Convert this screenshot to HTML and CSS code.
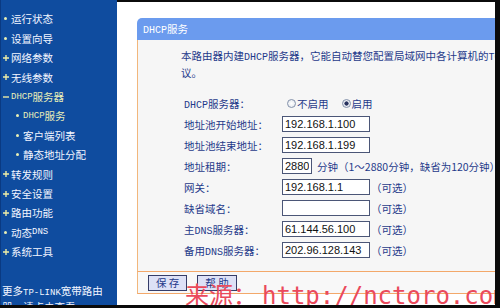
FILE: index.html
```html
<!DOCTYPE html>
<html lang="zh-CN">
<head>
<meta charset="utf-8">
<title>DHCP服务</title>
<link rel="stylesheet" href="styles.css">
</head>
<body>
<div class="screen">
  <nav class="sidebar">
    <ul class="menu">
      <li class="item"><span class="mk"><i class="dot"></i></span>运行状态</li>
      <li class="item"><span class="mk"><i class="dot"></i></span>设置向导</li>
      <li class="item"><span class="mk"><svg class="ic" viewBox="0 0 7 7"><path d="M0 3.5H7M3.5 0V7"/></svg></span>网络参数</li>
      <li class="item"><span class="mk"><svg class="ic" viewBox="0 0 7 7"><path d="M0 3.5H7M3.5 0V7"/></svg></span>无线参数</li>
      <li class="item active"><span class="mk"><svg class="ic" viewBox="0 0 7 7"><path d="M0 3.5H7"/></svg></span><span class="en">DHCP</span>服务器</li>
      <li class="item sub active"><span class="mk"><i class="dot"></i></span><span class="en">DHCP</span>服务</li>
      <li class="item sub"><span class="mk"><i class="dot"></i></span>客户端列表</li>
      <li class="item sub"><span class="mk"><i class="dot"></i></span>静态地址分配</li>
      <li class="item"><span class="mk"><svg class="ic" viewBox="0 0 7 7"><path d="M0 3.5H7M3.5 0V7"/></svg></span>转发规则</li>
      <li class="item"><span class="mk"><svg class="ic" viewBox="0 0 7 7"><path d="M0 3.5H7M3.5 0V7"/></svg></span>安全设置</li>
      <li class="item"><span class="mk"><svg class="ic" viewBox="0 0 7 7"><path d="M0 3.5H7M3.5 0V7"/></svg></span>路由功能</li>
      <li class="item"><span class="mk"><i class="dot"></i></span>动态<span class="en">DNS</span></li>
      <li class="item"><span class="mk"><svg class="ic" viewBox="0 0 7 7"><path d="M0 3.5H7M3.5 0V7"/></svg></span>系统工具</li>
    </ul>
    <p class="more">更多<span class="en">TP-LINK</span>宽带路由<br>器，请点击查看 &gt;&gt;</p>
  </nav>

  <main class="main">
    <section class="panel">
      <h1 class="panel-title"><span class="en">DHCP</span>服务</h1>
      <div class="panel-body">
        <p class="intro">本路由器内建<span class="en">DHCP</span>服务器，它能自动替您配置局域网中各计算机的<span class="en">TCP/IP</span>协<br>议。</p>
        <div class="form">
          <div class="row">
            <span class="label"><span class="en">DHCP</span>服务器：</span>
            <div class="field">
              <label class="radio"><input type="radio" name="dhcp">不启用</label>
              <label class="radio"><input type="radio" name="dhcp" checked>启用</label>
            </div>
          </div>
          <div class="row">
            <span class="label">地址池开始地址：</span>
            <div class="field"><input class="txt" type="text" value="192.168.1.100"></div>
          </div>
          <div class="row">
            <span class="label">地址池结束地址：</span>
            <div class="field"><input class="txt" type="text" value="192.168.1.199"></div>
          </div>
          <div class="row">
            <span class="label">地址租期：</span>
            <div class="field"><input class="txt short" type="text" value="2880"><span class="note">分钟（1～2880分钟，缺省为120分钟）</span></div>
          </div>
          <div class="row">
            <span class="label">网关：</span>
            <div class="field"><input class="txt" type="text" value="192.168.1.1"><span class="opt">（可选）</span></div>
          </div>
          <div class="row">
            <span class="label">缺省域名：</span>
            <div class="field"><input class="txt" type="text" value=""><span class="opt">（可选）</span></div>
          </div>
          <div class="row">
            <span class="label">主<span class="en">DNS</span>服务器：</span>
            <div class="field"><input class="txt" type="text" value="61.144.56.100"><span class="opt">（可选）</span></div>
          </div>
          <div class="row">
            <span class="label">备用<span class="en">DNS</span>服务器：</span>
            <div class="field"><input class="txt" type="text" value="202.96.128.143"><span class="opt">（可选）</span></div>
          </div>
        </div>
      </div>
      <div class="panel-actions">
        <button class="btn" type="button">保 存</button>
        <button class="btn" type="button">帮 助</button>
      </div>
    </section>
    <div class="watermark"><span class="wm-cn">来源：</span>http://nctoro.com</div>
  </main>
</div>
</body>
</html>
```

FILE: styles.css
```css
* {
  box-sizing: border-box;
  margin: 0;
  padding: 0;
}

html,
body {
  width: 500px;
  height: 308px;
  overflow: hidden;
  background: #0b0b0b;
}

body {
  font-family: "Noto Sans CJK SC", sans-serif;
  font-size: 10.5px;
}

.en {
  font-family: "Liberation Mono", monospace;
  font-size: 10px;
}

.screen {
  display: flex;
  height: 305px;
}

/* ---------- sidebar ---------- */
.sidebar {
  width: 117px;
  flex: none;
  display: flex;
  flex-direction: column;
  overflow: hidden;
  background: #0f4c9f;
  border-left: 1px solid #0a3a82;
  color: #f3f6ff;
}

.sidebar .en {
  font-size: 9px;
}

.menu {
  list-style: none;
  padding-top: 9.3px;
}

.item {
  display: flex;
  align-items: center;
  height: 19.4px;
  padding-left: 1px;
  white-space: nowrap;
}

.item.sub {
  padding-left: 13px;
}

.item.active {
  color: #eaf0b8;
}

.mk {
  width: 9px;
  flex: none;
  display: flex;
  align-items: center;
  padding-left: 1px;
}

.dot {
  display: block;
  width: 3px;
  height: 3px;
  margin-left: 1px;
  border-radius: 50%;
  background: #e8efb4;
}

.ic {
  display: block;
  width: 6px;
  height: 6px;
  fill: none;
  stroke: #efeea6;
  stroke-width: 1.6;
}

.more {
  margin-top: 22.5px;
  padding-left: 1px;
  line-height: 14px;
  white-space: nowrap;
}

/* ---------- main ---------- */
.main {
  flex: 1;
  position: relative;
  overflow: hidden;
  background: #ffffff;
  border-top: 2px solid #0b0b0b;
  border-right: 5px solid #0b0b0b;
  padding: 16px 0 0 20px;
}

.panel {
  width: 420px;
}

.panel-title {
  height: 22px;
  line-height: 22px;
  padding-left: 6px;
  font-size: 10.5px;
  font-weight: normal;
  color: #ffffff;
  background: #6b9bee;
  border-radius: 5px 5px 0 0;
}

.panel-body {
  background: #f6f6f6;
  border-left: 1px solid #f2b77c;
  padding: 8px 0 10.5px 43px;
  color: #1f3a8a;
}

.intro {
  line-height: 15px;
  white-space: nowrap;
}

.form {
  margin-top: 12.5px;
  margin-left: 3px;
}

.row {
  display: flex;
  align-items: center;
  height: 21px;
}

.label {
  width: 98px;
  flex: none;
  white-space: nowrap;
}

.field {
  display: flex;
  align-items: center;
  white-space: nowrap;
}

.txt {
  width: 88px;
  height: 16px;
  padding: 0 2px;
  border: 1px solid #4b5677;
  background: #ffffff;
  color: #111111;
  font-family: "Liberation Sans", sans-serif;
  font-size: 11px;
  outline: none;
}

.txt.short {
  width: 30px;
}

.note {
  margin-left: 5px;
}

.opt {
  margin-left: 1px;
}

.radio {
  display: flex;
  align-items: center;
}

.radio + .radio {
  margin-left: 8px;
}

.radio input {
  appearance: none;
  -webkit-appearance: none;
  width: 9px;
  height: 9px;
  margin: 0 1px 0 5px;
  border: 1px solid #8391aa;
  border-radius: 50%;
  background: radial-gradient(circle, #ffffff 0, #dfe3ea 100%);
}

.radio input:checked {
  background: radial-gradient(circle, #28325e 0 1.8px, #e9ecf2 2.4px);
}

.panel-actions {
  display: flex;
  align-items: center;
  gap: 10px;
  height: 23px;
  padding-left: 10px;
  background: #f8f8f8;
  border-top: 1px solid #f3a86a;
  border-bottom: 1px solid #f3a86a;
  border-left: 1px solid #f2b77c;
}

.btn {
  height: 16px;
  padding: 0 7px;
  border: 1px solid #363d68;
  background: #dde1f6;
  color: #1f3a8a;
  font-family: "Noto Sans CJK SC", sans-serif;
  font-size: 10.5px;
  line-height: 14px;
}

.watermark {
  position: absolute;
  left: 68px;
  top: 282px;
  white-space: nowrap;
  font-family: "DejaVu Sans Mono", "Noto Sans CJK SC", monospace;
  font-size: 24px;
  line-height: 24px;
  color: #ea4a5c;
}

.wm-cn {
  margin-right: 5px;
}
```
